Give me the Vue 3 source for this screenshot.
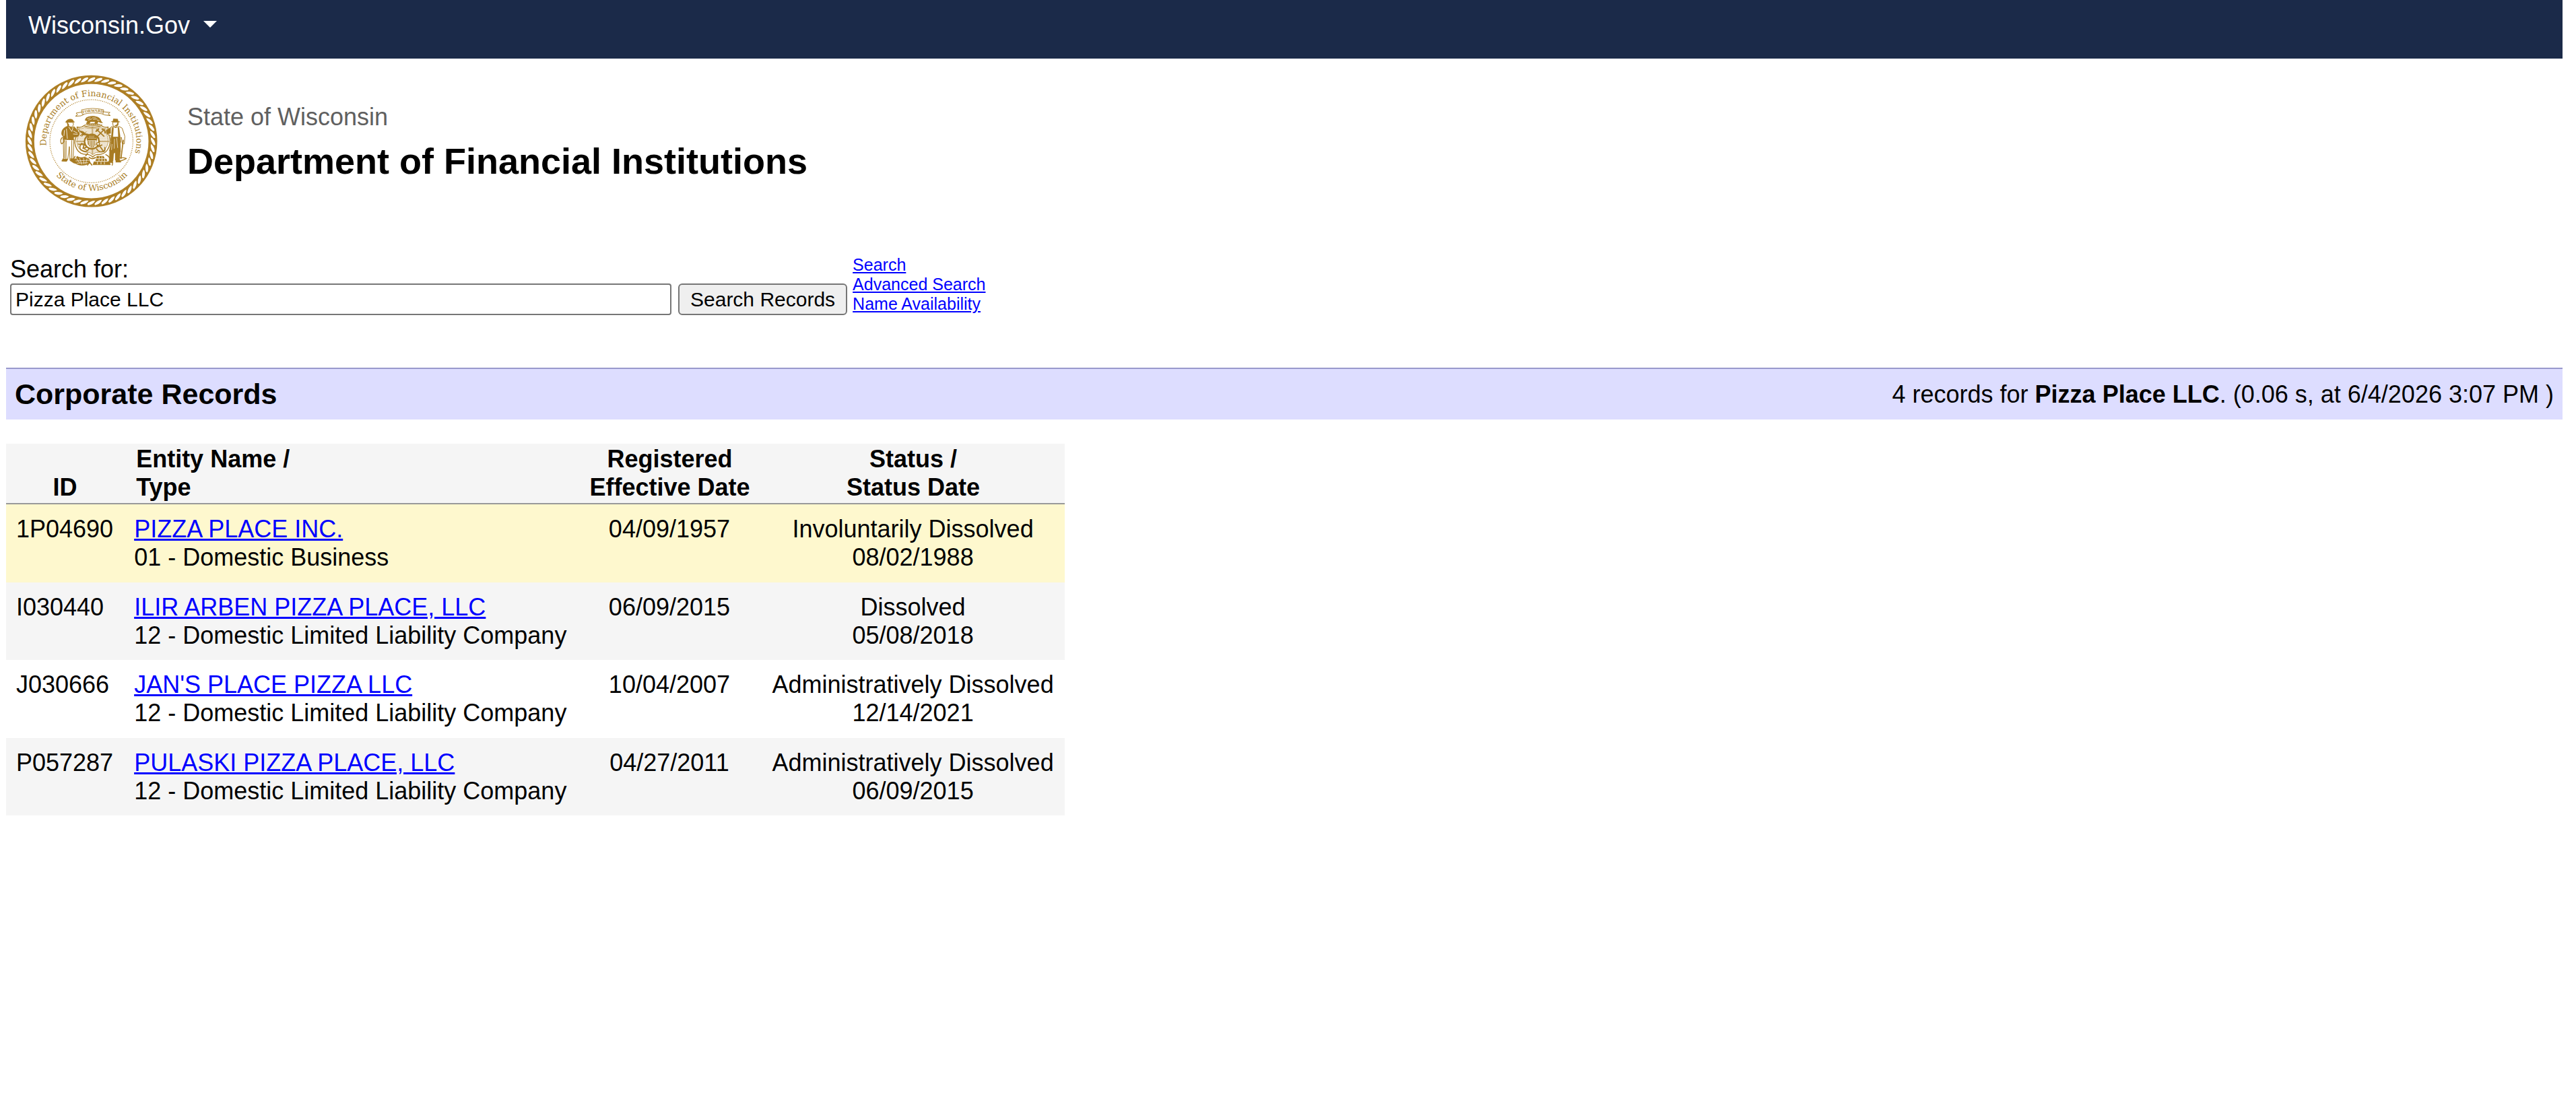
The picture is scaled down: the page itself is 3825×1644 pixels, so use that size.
<script setup>
import { ref } from 'vue'

const query = ref('Pizza Place LLC')

const links = ['Search', 'Advanced Search', 'Name Availability']

const records = [
  {
    id: '1P04690',
    name: 'PIZZA PLACE INC.',
    type: '01 - Domestic Business',
    registered: '04/09/1957',
    status: 'Involuntarily Dissolved',
    statusDate: '08/02/1988',
    highlight: true
  },
  {
    id: 'I030440',
    name: 'ILIR ARBEN PIZZA PLACE, LLC',
    type: '12 - Domestic Limited Liability Company',
    registered: '06/09/2015',
    status: 'Dissolved',
    statusDate: '05/08/2018'
  },
  {
    id: 'J030666',
    name: "JAN'S PLACE PIZZA LLC",
    type: '12 - Domestic Limited Liability Company',
    registered: '10/04/2007',
    status: 'Administratively Dissolved',
    statusDate: '12/14/2021'
  },
  {
    id: 'P057287',
    name: 'PULASKI PIZZA PLACE, LLC',
    type: '12 - Domestic Limited Liability Company',
    registered: '04/27/2011',
    status: 'Administratively Dissolved',
    statusDate: '06/09/2015'
  }
]

// strands of the rope border around the seal
const strandCount = 56
const strands = Array.from({ length: strandCount }, (_, i) => (i * 360) / strandCount)
</script>

<template>
  <div class="page">
    <nav class="topbar">
      <a href="#" class="topbar-link">Wisconsin.Gov <span class="caret"></span></a>
    </nav>

    <header class="masthead">
      <svg class="seal" viewBox="33 15 630 627" role="img" aria-label="Department seal">
        <defs>
          <path id="arc-top" d="M147 350 A201 201 0 1 1 541 382" />
          <path id="arc-bottom" d="M168 456 A220 220 0 0 0 530 454" />
          <path id="arc-motto" d="M112 41 Q160 28 212 39" />
          <pattern id="dots" width="5" height="5" patternUnits="userSpaceOnUse">
            <rect width="5" height="5" fill="#fff" />
            <circle cx="1.5" cy="1.5" r="1.2" fill="#ae7f24" />
            <circle cx="4" cy="4" r="1" fill="#ae7f24" />
          </pattern>
        </defs>

        <!-- rope -->
        <circle cx="347" cy="329" r="274" fill="none" stroke="#ae7f24" stroke-width="39" />
        <g fill="#fff">
          <path
            v-for="angle in strands"
            :key="angle"
            d="M330 64 C335 53 346 45 362 44 C366 46 365 51 360 54 C350 61 341 65 330 64 Z"
            :transform="`rotate(${angle} 347 329)`"
          />
        </g>
        <circle
          cx="347" cy="329" r="185" fill="none" stroke="#ae7f24" stroke-width="4"
          stroke-linecap="round" stroke-dasharray="0.1 8.2"
        />

        <g class="seal-text">
          <text><textPath href="#arc-top" startOffset="50%">Department of Financial Institutions</textPath></text>
          <text><textPath href="#arc-bottom" startOffset="50%">State of Wisconsin</textPath></text>
        </g>

        <g transform="translate(192 165)" stroke="#a87b22" fill="#a87b22" stroke-linejoin="round" stroke-linecap="round">
          <!-- motto ribbon -->
          <path d="M112 24 Q160 12 210 24 L207 43 Q160 32 116 45 Z" fill="#fff" stroke-width="2.5" />
          <path d="M113 34 L87 39 L93 46 L84 53 L108 51 L120 46 M209 33 L238 36 L230 43 L240 50 L214 47 L205 43" fill="none" stroke-width="3" />
          <text class="motto" stroke="none"><textPath href="#arc-motto" startOffset="50%">FORWARD</textPath></text>

          <!-- badger crest -->
          <path d="M127 70 Q129 58 143 55 Q163 49 181 56 Q196 61 198 75 L205 82 L194 81 L186 76 L181 86 L170 86 L172 77 L151 77 L145 87 L132 86 L138 75 Z" stroke-width="2" />
          <path d="M137 64 L150 60 M142 70 L157 65 M160 60 L174 60 M164 67 L180 65 M181 70 L190 71" stroke="#fff" stroke-width="2" fill="none" />
          <path d="M124 91 Q160 78 204 91 Q163 100 124 91 Z" stroke-width="1" />
          <path d="M130 90 L197 90" stroke="#fff" stroke-width="2" stroke-dasharray="5 4" />

          <!-- shield -->
          <path d="M91 101 Q110 106 121 95 Q137 103 160 101 Q184 103 200 95 Q214 106 230 101 Q224 122 235 142 Q245 177 225 205 Q207 226 180 223 Q170 224 161 234 Q151 224 139 223 Q104 225 90 199 Q74 170 88 142 Q98 121 91 101 Z" fill="#fff" stroke-width="4" />
          <path d="M99 108 Q113 111 124 103 Q140 109 160 107 Q183 109 197 103 Q211 110 222 108 Q216 125 228 145 Q235 174 218 197 Q203 216 176 214 L161 224 L147 214 Q112 216 98 194 Q84 168 95 145 Q105 124 99 108 Z" fill="url(#dots)" stroke-width="2" />
          <path d="M160 105 V223 M89 165 H232" stroke-width="5" />
          <path d="M160 105 V223 M89 165 H232" stroke="#fff" stroke-width="1.5" />
          <circle cx="157" cy="166" r="35" stroke-width="2" />
          <circle cx="157" cy="166" r="29" fill="#fff" stroke-width="1" />
          <path d="M138 151 H178 V170 Q176 185 158 193 Q139 184 138 170 Z" fill="#fff" stroke-width="2" />
          <path d="M142 163 V179 M149 163 V185 M156 163 V190 M163 163 V188 M170 163 V182" stroke-width="4" />
          <path d="M137 143 Q157 133 178 143 L180 160 H136 Z" />
          <path d="M142 151 H174 M146 145 H169" stroke="#fff" stroke-width="2" stroke-dasharray="2 4" />

          <!-- plow, pick and shovel, arm and hammer, anchor -->
          <path d="M102 120 Q116 115 128 130 L143 133 L137 139 L119 136 L104 140 L115 131 Z" stroke-width="2" />
          <path d="M106 118 L98 112 M112 143 L132 122" stroke-width="3" />
          <path d="M179 112 L211 142 M213 111 L182 143" stroke-width="5" />
          <path d="M203 111 Q217 113 216 127 M176 120 L187 110 M177 142 L188 150" stroke-width="6" fill="none" />
          <path d="M105 185 Q100 201 116 206 Q136 216 144 197 L134 189 Q127 198 119 192 L123 178 L111 174 Z" fill="#fff" stroke-width="5" />
          <path d="M97 177 L126 181 M116 195 L137 205" stroke-width="4" />
          <path d="M189 180 L207 207 M178 198 Q189 217 211 210 Q218 204 215 192 M183 190 L202 181" stroke-width="5" fill="none" />
          <circle cx="185" cy="176" r="6" fill="#fff" stroke-width="4" />

          <!-- sailor -->
          <path d="M42 75 Q49 65 60 65 Q74 65 75 74 L81 79 Q62 84 40 80 Z" stroke-width="1" />
          <path d="M48 80 H74 L75 92 L67 101 L53 98 Z" fill="#fff" stroke-width="3" />
          <path d="M47 80 L49 95 L56 99 L54 88 Z" />
          <path d="M49 96 L67 103 L78 98 Q88 107 93 118 L102 127 Q104 138 94 144 L76 147 L78 161 Q51 166 29 158 L28 142 Q19 136 23 121 Q28 103 49 96 Z" />
          <path d="M55 102 L68 121 L73 104 M76 119 L91 127 M75 132 L93 133 M35 116 L33 139 M44 110 L48 152" stroke="#fff" stroke-width="2.5" fill="none" />
          <path d="M31 156 L77 158 L74 239 L83 246 L80 252 L60 250 L57 188 L50 244 L45 253 L24 252 L31 240 Z" fill="#fff" stroke-width="3" />
          <path d="M37 161 L36 239 M43 162 L42 241 M68 161 L67 240" stroke-width="3" />
          <path d="M29 242 L50 243 L45 254 L23 253 Z M62 241 L75 241 L84 247 L80 253 L61 251 Z" />
          <path d="M25 148 Q13 160 22 176 Q38 170 31 151" fill="none" stroke-width="4" />

          <!-- miner -->
          <path d="M244 77 L251 74 L253 64 L272 65 L275 75 L283 78 Q265 85 244 77 Z" stroke-width="1" />
          <path d="M251 79 H275 L273 93 L263 101 L253 96 Z" fill="#fff" stroke-width="3" />
          <path d="M272 80 L274 91 L265 99 L259 94 L268 91 Z" />
          <path d="M248 99 L264 104 L278 98 L292 106 L304 142 L302 176 L293 176 L289 147 L284 151 L286 169 L239 171 L243 140 L225 132 L222 118 Z" fill="#fff" stroke-width="3" />
          <path d="M241 104 L222 116 L226 133 L241 129 Z M247 102 L242 170 L235 207 L285 210 L284 147 L278 102 L273 103 L275 145 L251 145 L254 104 Z" />
          <path d="M236 205 L285 207 L281 249 L261 249 L261 215 L255 218 L252 252 L234 255 Z" stroke-width="1" />
          <path d="M258 155 L257 196 M268 151 L272 193 M247 178 L245 202" stroke="#fff" stroke-width="2" />
          <path d="M251 253 L251 260 L229 260 L235 249 Z M264 248 H283 L287 258 L264 258 Z" />
          <path d="M297 160 L287 241" stroke-width="5" />
          <path d="M271 239 Q295 235 311 241 Q300 247 285 252" stroke-width="4" fill="none" />

          <!-- cornucopia and lead ingots -->
          <path d="M64 253 Q86 248 91 231 Q107 242 124 234 L145 243 L149 260 L132 269 Q105 276 84 263 Q75 263 64 253 Z" stroke-width="2" />
          <path d="M88 239 L102 260 M103 240 L112 267 M120 239 L122 265 M135 243 L130 264 M86 252 L145 249 M91 262 L139 260" stroke="#fff" stroke-width="2" />
          <path d="M145 236 Q158 247 173 237 M138 270 L147 257 L157 270 M76 244 L82 232 M130 229 L138 219" stroke-width="5" fill="none" />
          <path d="M180 231 H209 L214 243 H221 L226 255 H235 L240 269 H162 L167 255 H173 L177 243 Z" stroke-width="2" />
          <path d="M178 242 H216 M171 254 H228 M190 233 V240 M202 233 V240 M189 245 V252 M202 245 V252 M214 245 V252 M182 257 V266 M198 257 V266 M213 257 V266" stroke="#fff" stroke-width="2.5" />
          <path d="M219 224 Q234 230 239 246 M242 250 Q253 257 248 271" stroke-width="4" fill="none" />
        </g>
      </svg>
      <div class="titles">
        <div class="state">State of Wisconsin</div>
        <h1>Department of Financial Institutions</h1>
      </div>
    </header>

    <form class="search" @submit.prevent>
      <div class="search-field">
        <label for="query">Search for:</label>
        <div class="search-row">
          <input id="query" v-model="query" type="text">
          <button type="submit">Search Records</button>
        </div>
      </div>
      <div class="search-links">
        <a v-for="link in links" :key="link" href="#">{{ link }}</a>
      </div>
    </form>

    <div class="results-bar">
      <h2>Corporate Records</h2>
      <div>4 records for <b>Pizza Place LLC</b>. (0.06 s, at 6/4/2026 3:07 PM )</div>
    </div>

    <table class="results">
      <thead>
        <tr>
          <th>ID</th>
          <th class="entity">Entity Name /<br>Type</th>
          <th>Registered<br>Effective Date</th>
          <th>Status /<br>Status Date</th>
        </tr>
      </thead>
      <tbody>
        <tr v-for="record in records" :key="record.id" :class="{ highlight: record.highlight }">
          <td>{{ record.id }}</td>
          <td><a href="#">{{ record.name }}</a><br>{{ record.type }}</td>
          <td class="center">{{ record.registered }}</td>
          <td class="center">{{ record.status }}<br>{{ record.statusDate }}</td>
        </tr>
      </tbody>
    </table>
  </div>
</template>

<style>
body {
  margin: 0;
  background: #fff;
}
</style>

<style scoped>
.page {
  padding: 0 20px 0 9px;
  font-family: Arial, "Liberation Sans", sans-serif;
  font-size: 36px;
  line-height: 42px;
  color: #000;
}

a {
  color: #0000ff;
}

.topbar {
  padding: 17px 33px 28px;
  background: #1b2a49;
}

.topbar-link {
  display: inline-flex;
  align-items: center;
  gap: 20px;
  color: #fff;
  text-decoration: none;
}

.caret {
  border: 10px solid transparent;
  border-top-color: #fff;
  border-bottom: 0;
  margin-bottom: 5px;
}

.masthead {
  display: flex;
  align-items: flex-start;
  gap: 37px;
  padding: 18px 22px 65px;
}

.seal {
  width: 210px;
  height: 209px;
}

.seal-text {
  font-family: "DejaVu Serif", serif;
  font-size: 38px;
  text-anchor: middle;
  fill: #a87b22;
}

.motto {
  font-family: "Liberation Serif", serif;
  font-size: 18px;
  font-weight: bold;
  text-anchor: middle;
}

.titles {
  padding-top: 48px;
}

.state {
  color: #606060;
}

h1 {
  margin: 13px 0 0;
  font-size: 54px;
  line-height: 62px;
}

.search {
  display: flex;
  gap: 8px;
  padding: 0 6px;
}

.search-field label {
  display: block;
}

.search-row {
  display: flex;
  gap: 10px;
}

.search input {
  box-sizing: border-box;
  width: 982px;
  height: 47px;
  padding: 0 6px;
  border: 2px solid #767676;
  border-radius: 4px;
  font: 30px Arial, "Liberation Sans", sans-serif;
}

.search button {
  height: 47px;
  padding: 0 16px;
  border: 2px solid #767676;
  border-radius: 6px;
  background: #efefef;
  color: #000;
  font: 30px Arial, "Liberation Sans", sans-serif;
}

.search-links {
  display: flex;
  flex-direction: column;
  align-items: flex-start;
  font-size: 25px;
  line-height: 29px;
}

.results-bar {
  display: flex;
  justify-content: space-between;
  align-items: center;
  margin-top: 78px;
  padding: 13px;
  border-top: 2px solid #9999cc;
  background: #ddddff;
}

h2 {
  margin: 0;
  font-size: 43px;
  line-height: 49px;
}

.results {
  margin-top: 36px;
  border-spacing: 0;
}

th {
  padding: 2px 18px;
  border-bottom: 2px solid #999;
  background: #f5f5f5;
  vertical-align: bottom;
}

.entity {
  text-align: left;
}

td {
  padding: 16px 16px 16px 15px;
  vertical-align: top;
}

tbody tr:nth-child(even) {
  background: #f5f5f5;
}

tbody tr:nth-child(even) td {
  padding-bottom: 15px;
}

.highlight {
  background: #fef8ce;
}

.center {
  text-align: center;
}
</style>
